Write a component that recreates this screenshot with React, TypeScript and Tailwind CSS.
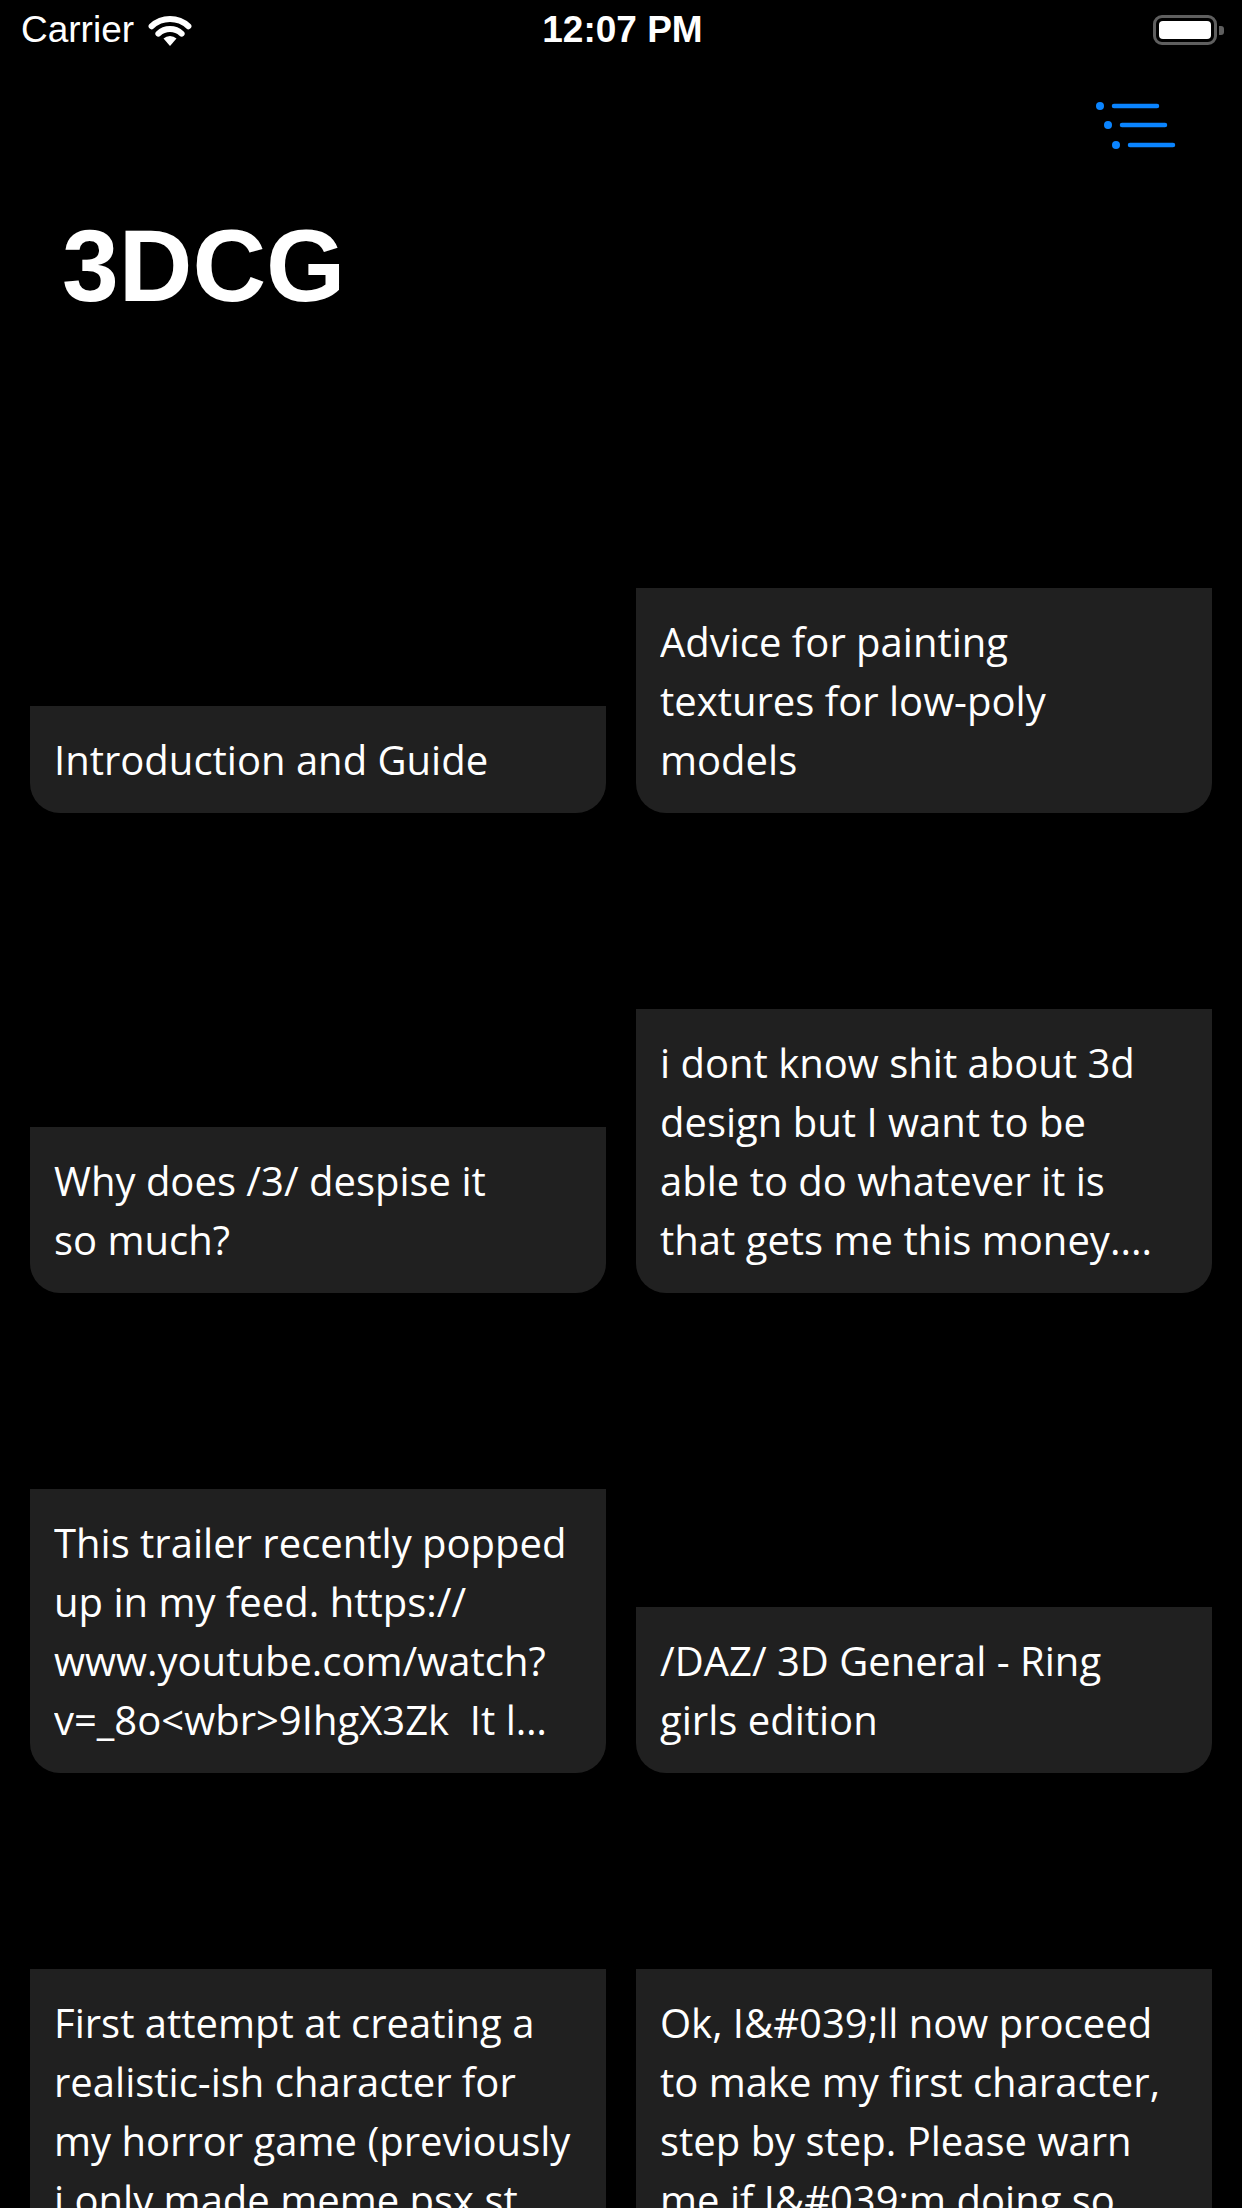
import React from 'react'

// lines are split the same way the app wraps them
const threads: string[][] = [
    ['Introduction and Guide'],
    ['Advice for painting', 'textures for low-poly', 'models'],
    ['Why does /3/ despise it', 'so much?'],
    ['i dont know shit about 3d', 'design but I want to be', 'able to do whatever it is', 'that gets me this money....'],
    ['This trailer recently popped', 'up in my feed. https://', 'www.youtube.com/watch?', 'v=_8o<wbr>9IhgX3Zk  It l…'],
    ['/DAZ/ 3D General - Ring', 'girls edition'],
    ['First attempt at creating a', 'realistic-ish character for', 'my horror game (previously', 'i only made meme psx st…'],
    ['Ok, I&#039;ll now proceed', 'to make my first character,', 'step by step. Please warn', 'me if I&#039;m doing so…'],
]

function Wifi() {
    return (
        <svg width="44" height="34" viewBox="0 0 44 34" fill="none">
            <path d="M 22 33 L 15.5 25.5 A 9.5 9.5 0 0 1 28.5 25.5 Z" fill="white" />
            <path d="M 10.4 20.6 A 17 17 0 0 1 33.6 20.6" stroke="white" strokeWidth="6" strokeLinecap="round" />
            <path d="M 3.6 13.2 A 27 27 0 0 1 40.4 13.2" stroke="white" strokeWidth="6" strokeLinecap="round" />
        </svg>
    )
}

function Battery() {
    return (
        <div className="flex items-center">
            <div className="w-[64px] h-[30px] rounded-[9px] border-[3px] border-[#5f5f5f] p-[3px]">
                <div className="w-full h-full rounded-[4px] bg-white" />
            </div>
            <div className="w-[5px] h-[9px] ml-[2px] rounded-r-[3px] bg-[#5f5f5f]" />
        </div>
    )
}

function MenuIcon() {
    return (
        <svg width="82" height="52" viewBox="0 0 82 52" fill="none">
            <circle cx="5" cy="6" r="4" fill="#0a84ff" />
            <circle cx="13" cy="25" r="4" fill="#0a84ff" />
            <circle cx="21" cy="45" r="4" fill="#0a84ff" />
            <path d="M19 6H62M27 25H70M35 45H78" stroke="#0a84ff" strokeWidth="4.5" strokeLinecap="round" />
        </svg>
    )
}

export default function App() {
    return (
        <div className="bg-black w-[1242px] h-[2208px] overflow-hidden text-white">
            {/* status bar */}
            <div className="h-[60px] flex items-center justify-between pl-[21px] pr-[18px] font-['Liberation_Sans',sans-serif] text-[37px]">
                <div className="flex items-center gap-[14px] w-[300px]">
                    <span>Carrier</span>
                    <Wifi />
                </div>
                <span className="font-semibold">12:07 PM</span>
                <div className="w-[300px] flex justify-end">
                    <Battery />
                </div>
            </div>

            {/* nav */}
            <div className="h-[132px] flex items-center justify-end pr-[65px]">
                <MenuIcon />
            </div>
            <h1 className="mt-[23px] pl-[62px] font-['Liberation_Sans',sans-serif] font-bold text-[102px] leading-none">3DCG</h1>

            {/* threads */}
            <div className="mt-[46px] px-[30px] grid grid-cols-2 gap-[30px]">
                {threads.map((lines, i) => (
                    <div key={i} className="h-[450px] flex flex-col justify-end">
                        <div className="bg-[#202020] rounded-b-[30px] p-[24px]">
                            <p className="font-['Open_Sans',sans-serif] text-[40px] leading-[59px]">
                                {lines.map((l, j) => (
                                    <span key={j} className="block whitespace-pre overflow-hidden">{l}</span>
                                ))}
                            </p>
                        </div>
                    </div>
                ))}
            </div>
        </div>
    )
}
